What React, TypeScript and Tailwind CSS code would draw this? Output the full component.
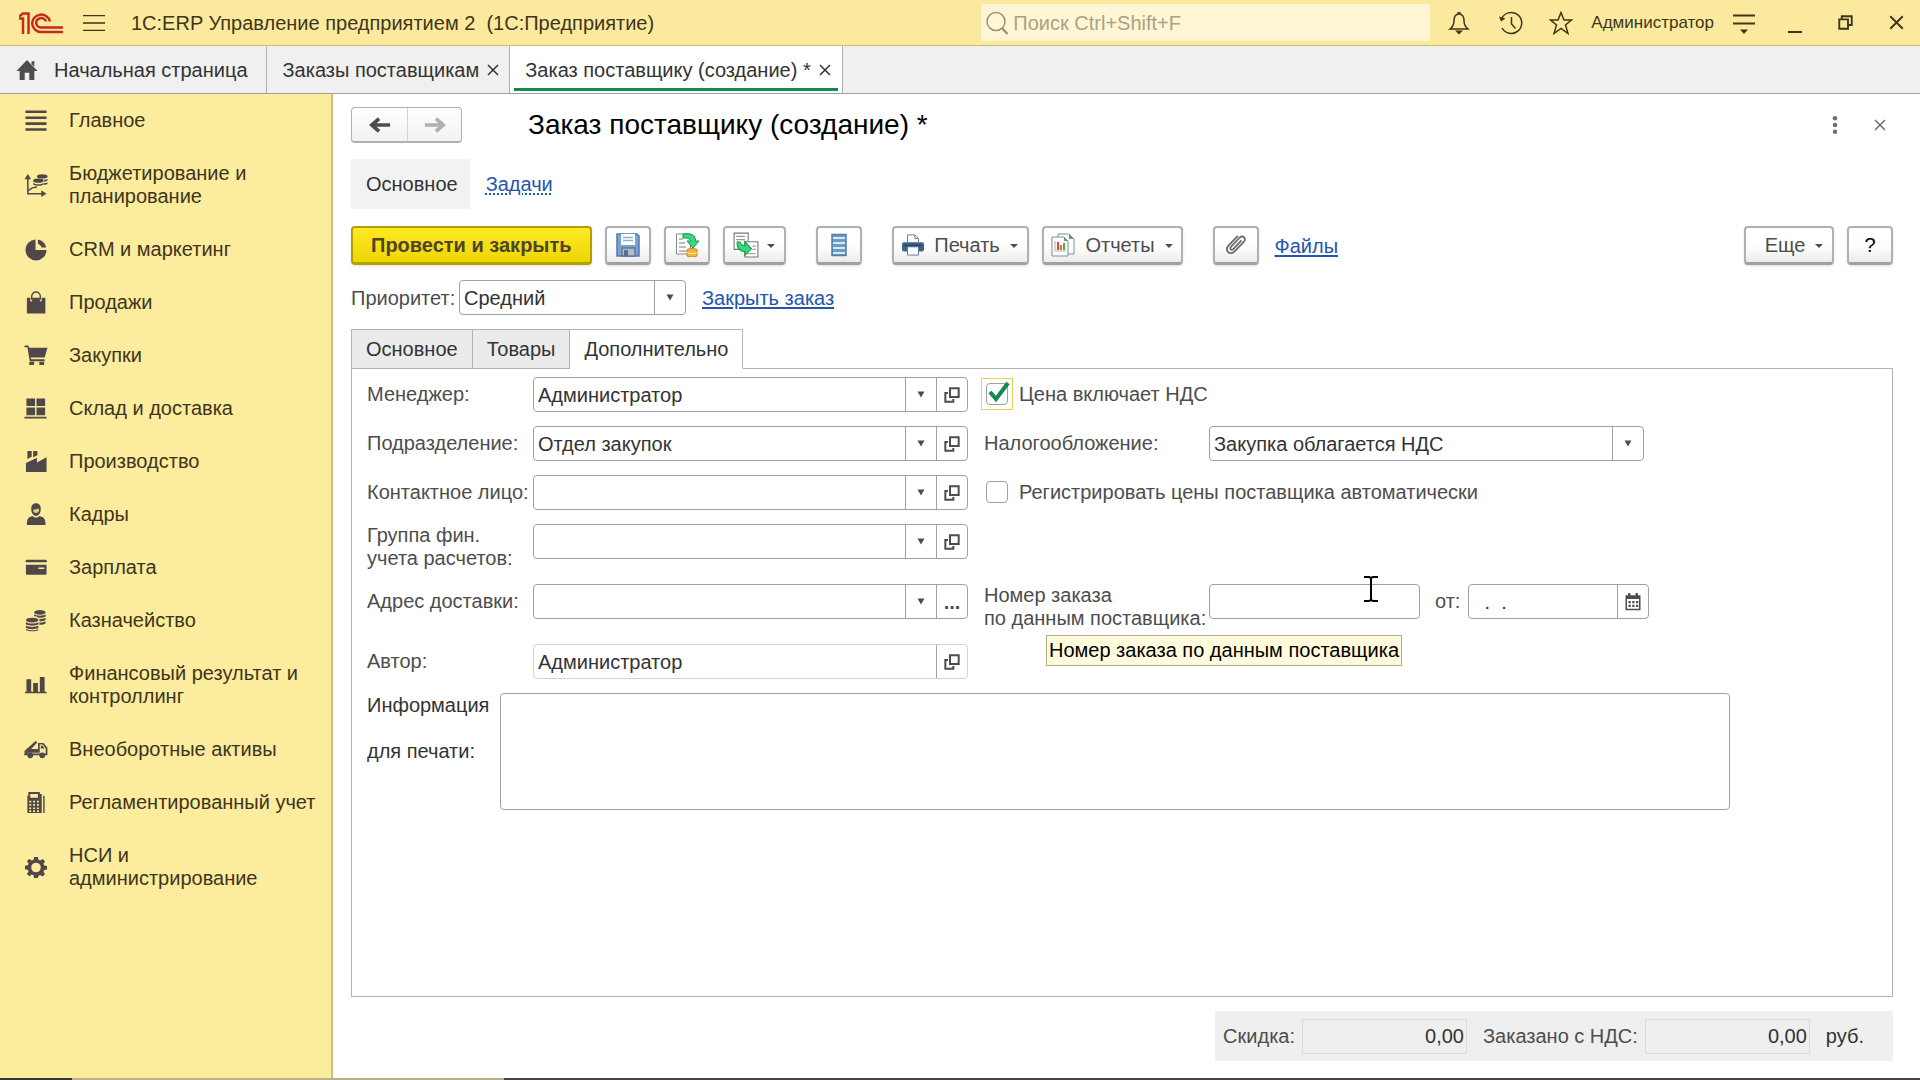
import { useState } from "react";
import type { ReactNode } from "react";

type IconProps = { children: ReactNode; className?: string };

function Icon({ children, className = "h-6 w-6" }: IconProps) {
  return (
    <svg
      viewBox="0 0 24 24"
      fill="none"
      stroke="currentColor"
      strokeWidth="1.5"
      aria-hidden="true"
      className={`shrink-0 ${className}`}
    >
      {children}
    </svg>
  );
}

function Solid({ children, className = "h-6 w-6" }: IconProps) {
  return (
    <svg
      viewBox="0 0 24 24"
      fill="currentColor"
      aria-hidden="true"
      className={`shrink-0 ${className}`}
    >
      {children}
    </svg>
  );
}

function Caret() {
  return (
    <svg viewBox="0 0 8 7" fill="currentColor" aria-hidden="true" className="h-[7px] w-2 shrink-0">
      <path d="M.5 0.500h7L4 6.500z" />
    </svg>
  );
}

function MenuCaret() {
  return (
    <svg viewBox="0 0 8 6" fill="currentColor" aria-hidden="true" className="h-1.5 w-2 shrink-0">
      <path d="M0 2h8L4 6z" />
    </svg>
  );
}

function Cross({ className = "h-3 w-3" }: { className?: string }) {
  return (
    <svg
      viewBox="0 0 12 12"
      fill="none"
      stroke="currentColor"
      strokeWidth="1.5"
      aria-hidden="true"
      className={`shrink-0 ${className}`}
    >
      <path d="M1 1l10 10M11 1L1 11" />
    </svg>
  );
}

const sections = [
  {
    title: "Главное",
    icon: <path d="M1 1.500h22v2.700H1zM1 7.700h22v2.700H1zM1 13.900h22v2.700H1zM1 20.100h22v2.700H1z" />,
  },
  {
    title: "Бюджетирование и\nпланирование",
    icon: (
      <>
        <path d="M2.700 4h1.600v15.700H19v1.600H2.700z" />
        <path d="M3.500 0L7 5.500H0zM23 20.500L17.500 17v7z" />
        <path d="M4 17.500l4-3 5-1" fill="none" stroke="currentColor" strokeWidth="1.500" />
        <ellipse cx="18.500" cy="2.500" rx="5.500" ry="2.200" />
        <ellipse cx="14.500" cy="7" rx="5.500" ry="2.200" />
        <path d="M20.500 6c1.500 0 3-.4 3.500-1v1.800c-.8.8-2 1.200-3.500 1.200zM20.500 9.500c1.500 0 3-.4 3.500-1v1.800c-.8.8-2 1.200-3.500 1.200zM9 9.300c2.500 1.700 8.500 1.700 11 0V11c-2.500 1.700-8.500 1.700-11 0z" />
      </>
    ),
  },
  {
    title: "CRM и маркетинг",
    icon: (
      <>
        <path d="M11.500 1.500V12.500H23A11 11 0 1 1 11.500 1.500z" />
        <path d="M14 1.500a10.500 10.500 0 0 1 8.500 8.500h-4.500a6 6 0 0 0-4-4z" />
      </>
    ),
  },
  {
    title: "Продажи",
    icon: (
      <>
        <path d="M2.500 7H6v3a1 1 0 0 0 2 0V7h8v3a1 1 0 0 0 2 0V7h3.800v16.500H2.500z" />
        <path d="M7.500 9V5.500a4.500 4.500 0 0 1 9 0V9" fill="none" stroke="currentColor" strokeWidth="1.500" />
      </>
    ),
  },
  {
    title: "Закупки",
    icon: (
      <>
        <path d="M0 1.500h4L5 4h19l-3 10H6.500l.5 2h14v2H5.500L3 3.500H0z" />
        <path d="M5 18.500h5V22H5zM15.500 18.500h5V22h-5z" />
      </>
    ),
  },
  {
    title: "Склад и доставка",
    icon: <path d="M2 1.500h9v8H2zM12.500 1.500h9v8h-9zM2 11h9v8H2zM12.500 11h9v8h-9zM0 20.500h23v2H0z" />,
  },
  {
    title: "Производство",
    icon: <path d="M3 1h4.500v6L3 9.500zM9 1h4.500v4.500L9 7.500zM1.500 13.500L13 8v5l10-5.500V23H1.500z" />,
  },
  {
    title: "Кадры",
    icon: (
      <>
        <path d="M7 6c0-7.500 10-7.500 10 0 0 4-2 7.500-5 7.500S7 10 7 6z" />
        <path d="M2.500 23c0-7 1.500-8.500 6-9.500 2 2.300 5 2.300 7 0 4.500 1 6.500 2.500 6.500 9.500z" />
        <path d="M9 7c2 0 4-.5 5-1.500l1.300 1.500c0 4.500-6.300 4.500-6.300 0z" fill="#fbec9e" opacity=".8" />
      </>
    ),
  },
  {
    title: "Зарплата",
    icon: <path d="M3 4h18.500a1.500 1.500 0 0 1 1.500 2.500H1.500A1.500 1.500 0 0 1 3 4zM1.500 9H23v9.500a1 1 0 0 1-1 1H2.500a1 1 0 0 1-1-1zm13 3v1.500h6V12z" />,
  },
  {
    title: "Казначейство",
    icon: (
      <>
        <ellipse cx="16" cy="3.500" rx="6" ry="2.500" />
        <path d="M10 5.500c3 2 9 2 12 0v2.300c-2 1.200-5 1.500-7.500 1.300C13.500 8 12 7.500 10 7.500zM15.500 10.500c2.500 0 5-.3 6.500-1.300v2.300c-1.500 1-4 1.400-6.500 1.300zM15.500 14.200c2.500 0 5-.3 6.500-1.300v2.300c-1.500 1-4 1.400-6.500 1.300z" />
        <ellipse cx="8" cy="11.500" rx="6.500" ry="2.500" />
        <path d="M1.500 13.500c3 2.200 10 2.200 13 0V16c-3 2-10 2-13 0zM1.500 17.200c3 2 10 2 13 0v2.300c-3 2-10 2-13 0zM1.500 20.800c3 1.800 10 1.800 13 0v1c-3 2-10 2-13 0z" />
      </>
    ),
  },
  {
    title: "Финансовый результат и\nконтроллинг",
    icon: <path d="M2 5.500h5V19H2zM9 9.500h5V19H9zM16 3h5v16h-5zM.5 18.500H23V20H.5z" />,
  },
  {
    title: "Внеоборотные активы",
    icon: (
      <>
        <path d="M11.500 3l2 1.500L7 11.500h8V14H2.500L0 17v-3.500z" />
        <path
          d="M1 17l2.500-2.500H15V6h4.500l3.500 4.500V17z"
          fill="none"
          stroke="currentColor"
          strokeWidth="1.800"
        />
        <circle cx="6" cy="18" r="3" />
        <circle cx="18.500" cy="18" r="3" />
        <path d="M17 8h2l2 3h-4z" />
      </>
    ),
  },
  {
    title: "Регламентированный учет",
    icon: (
      <>
        <path d="M4 1h12v2h2v20H3V5h1zM6 3v4h8V3z" fillRule="evenodd" />
        <path d="M19.500 5H21v18h-1.500z" />
        <path
          d="M5 11h2M9 11h2M13 11h2M5 14.500h2M9 14.500h2M13 14.500h2M5 18h2M9 18h2M13 18h2M5 21h2M9 21h2M13 21h2"
          stroke="#fbec9e"
          strokeWidth="1.800"
        />
      </>
    ),
  },
  {
    title: "НСИ и\nадминистрирование",
    icon: (
      <path
        fillRule="evenodd"
        d="M10 1h4l.6 3 1.700.7L19 3l2.400 2.700-1.600 2.500.7 1.800 3 .5v3.500l-3 .6-.7 1.800 1.600 2.600-2.600 2.500-2.500-1.600-1.700.7L14 23h-4l-.6-2.900-1.700-.7L5 21.200l-2.500-2.500 1.700-2.600-.7-1.800-3-.6v-3.500l3-.5.7-1.800-1.700-2.600L5 3l2.700 1.700L9.400 4zM12 7a5 5 0 1 0 0 10 5 5 0 0 0 0-10z"
      />
    ),
  },
];

function TopBar() {
  return (
    <header className="flex h-[46px] items-center border-b border-[#c9bc74] bg-[#fbea9e] pl-[19px] pr-4 text-[#40351a]">
      <svg
        viewBox="0 0 44 22"
        fill="none"
        stroke="#c8281e"
        strokeWidth="2.500"
        className="h-[22px] w-11 shrink-0"
        aria-label="1С"
      >
        <path d="M0 6.500h4V22M0 4.500L4 1.500h5.500V22" />
        <path d="M31 9.500a9 8.700 0 1 0-9 10.500h22" />
        <path d="M27 9.500a5 4.700 0 1 0-5 6h22" />
      </svg>
      <button type="button" aria-label="Меню" className="ml-5">
        <Icon className="h-6 w-[22px]">
          <path d="M0 4h24M0 12h24M0 20h24" />
        </Icon>
      </button>
      <h1 className="ml-[26px] whitespace-pre">1С:ERP Управление предприятием 2  (1С:Предприятие)</h1>

      <div className="ml-auto flex h-[37px] w-[449px] items-center bg-[#fff6d5] pl-1">
        <Icon className="h-6 w-6 text-[#9c9477]">
          <circle cx="11" cy="10.500" r="9" />
          <path d="M17 17l5.500 6" strokeWidth="2.500" />
        </Icon>
        <input
          type="search"
          aria-label="Поиск"
          placeholder="Поиск Ctrl+Shift+F"
          className="ml-1 w-full min-w-0 bg-transparent outline-none placeholder:text-[#aaa285]"
        />
      </div>

      <button type="button" aria-label="Уведомления" className="ml-[17px]">
        <Icon>
          <path d="M12 3c-4 0-5 3-5 7 0 4-1 5.500-4 8h18c-3-2.500-4-4-4-8 0-4-1-7-5-7z" />
          <path d="M8 19.500h8L12 23.500zM10.500 1h3v2h-3z" fill="currentColor" stroke="none" />
        </Icon>
      </button>
      <button type="button" aria-label="История" className="ml-7">
        <Icon>
          <path d="M2.500 8A10.500 10.500 0 1 1 3 17" />
          <path d="M0 5.500l2 5 4.500-3z" fill="currentColor" stroke="none" />
          <path d="M12.500 6v7l4 4.500" />
        </Icon>
      </button>
      <button type="button" aria-label="Избранное" className="ml-[26px]">
        <Icon>
          <path d="M12 1.500l3 7.500h7.500l-6 5 2.500 8.500-7-5-7 5L7.500 14l-6-5H9z" />
        </Icon>
      </button>
      <button type="button" className="ml-[18px] text-[17px]">
        Администратор
      </button>
      <button type="button" aria-label="Настройки" className="ml-[18px]">
        <Icon>
          <path d="M1 4.500h22M1 12.500h22" strokeWidth="2" />
          <path d="M8 18.500h8L12 23z" fill="currentColor" stroke="none" />
        </Icon>
      </button>
      <button type="button" aria-label="Свернуть" className="ml-8 flex h-6 w-3.5 items-end">
        <span className="mb-0.5 h-0.5 w-full bg-[#40351a]" />
      </button>
      <button type="button" aria-label="Восстановить" className="ml-9">
        <Icon className="h-[15px] w-[15px]">
          <path d="M6 6V2h16v14h-5M2 7h14v15H2z" strokeWidth="3" />
        </Icon>
      </button>
      <button type="button" aria-label="Закрыть" className="ml-9">
        <Cross className="h-[15px] w-[15px]" />
      </button>
    </header>
  );
}

function WindowTabs() {
  return (
    <nav aria-label="Открытые окна" className="flex h-12 border-b border-[#9f9f9f] bg-[#f0f0f0] text-[#333]">
      <a href="#home" className="flex items-center gap-4 border-r border-[#b0b0b0] pl-4 pr-[18px]">
        <Solid className="h-[22px] w-[22px] text-[#4d4d4d]">
          <path d="M12 1l11.500 12H20v10h-5.500v-8h-5v8H4V13H.5zM17 2.500h3v6l-3-3z" />
        </Solid>
        Начальная страница
      </a>
      <div className="flex items-center gap-2 border-r border-[#b0b0b0] pl-4 pr-2.5">
        <a href="#orders">Заказы поставщикам</a>
        <button type="button" aria-label="Закрыть вкладку">
          <Cross />
        </button>
      </div>
      <div className="border-r border-[#b0b0b0] bg-white px-1">
        <div className="flex h-[45px] items-center gap-2 border-b-[3px] border-[#118a4e] pl-[11px] pr-[7px] pt-[5px]">
          <a href="#order">Заказ поставщику (создание) *</a>
          <button type="button" aria-label="Закрыть вкладку">
            <Cross />
          </button>
        </div>
      </div>
    </nav>
  );
}

function Sidebar() {
  return (
    <aside className="w-[333px] shrink-0 border-r-2 border-[#cdbf85] bg-[#fbec9e] text-[#40351a]">
      <nav aria-label="Разделы">
        {sections.map((section) => (
          <a key={section.title} href="#section" className="flex items-center py-[15px] pl-6 pr-2 leading-[23px]">
            <Solid className="h-[23px] w-6 text-[#504848]">{section.icon}</Solid>
            <span className="ml-[21px] whitespace-pre-line">{section.title}</span>
          </a>
        ))}
      </nav>
    </aside>
  );
}

const toolButton =
  "flex h-[39px] items-center justify-center rounded border-2 border-b-[3px] border-[#b0b0b0] border-b-[#a0a0a0] bg-linear-to-b from-white from-50% to-[#ececec] text-[#4d4d4d] shadow-sm";

function Toolbar() {
  return (
    <div className="flex items-center pt-[17px]">
      <button
        type="button"
        className="h-[39px] rounded-sm border-2 border-b-[3px] border-[#b3a000] bg-linear-to-b from-[#ffe924] to-[#eed500] px-[18px] font-bold text-[#4d4526] shadow-sm"
      >
        Провести и закрыть
      </button>
      <button type="button" aria-label="Записать" className={`ml-[13px] w-[46px] ${toolButton}`}>
        <Icon>
          <path d="M1 1h20l2 2v20H1z" fill="#7ba3d0" stroke="#4f7cae" />
          <path d="M5 1h14v11H5z" fill="#fff" stroke="none" />
          <path d="M7 4.500h10M7 7.500h10" stroke="#8fb0d4" />
          <path d="M6 15h13v8H6z" fill="#b6bcc4" stroke="#5f7793" />
          <path d="M8 17h4v6H8z" fill="#4f6f96" stroke="none" />
        </Icon>
      </button>
      <button type="button" aria-label="Провести" className={`ml-[13px] w-[46px] ${toolButton}`}>
        <Icon>
          <path d="M1.500 1h14v20h-14z" fill="#fff" stroke="#8a8a8a" strokeWidth="1" />
          <path d="M4 6h4M4 10h6M4 14h7M4 18h7" stroke="#7a7a7a" strokeWidth="1" />
          <path d="M8 1c8-1 13 1 12.500 7H24l-6 7-6-7h3.500c0-2-3-3.500-7.500-3z" fill="#3ad67c" stroke="#149a4c" strokeWidth="1" />
          <path d="M12 16.500c2-1.200 8-1.200 10 0V23c-2 1.200-8 1.200-10 0z" fill="#f2b53c" stroke="#c58a1a" strokeWidth="1" />
          <path d="M12 19.800c3 1 7 1 10 0" stroke="#fff0c0" strokeWidth="1" />
        </Icon>
      </button>
      <button type="button" aria-label="Создать на основании" className={`ml-[13px] w-[63px] gap-2 ${toolButton}`}>
        <Icon className="h-[26px] w-[26px]">
          <path d="M1 1h13v15H1z" fill="#fff" stroke="#777" strokeWidth="1" />
          <path d="M11 9h12v14H11z" fill="#fff" stroke="#777" strokeWidth="1" />
          <path d="M3 4h8M3 7h8M18 13h3M18 16h3M13 20h8" stroke="#999" strokeWidth="1" />
          <path d="M4 9c2 0 3 0 3 1 0 2 1 2.500 4 2.500V9l6 6.500-6 6V18C6 18 3 14 4 9z" fill="#3ad67c" stroke="#149a4c" strokeWidth="1" />
        </Icon>
        <MenuCaret />
      </button>
      <button type="button" aria-label="Структура подчиненности" className={`ml-[30px] w-[46px] ${toolButton}`}>
        <Icon>
          <path d="M5 1.500h14v21H5z" fill="#6d9cc4" stroke="#527fa8" />
          <path d="M6 5h12M6 10h12M6 15h12M6 20h12" stroke="#d8e8f6" strokeWidth="2" />
        </Icon>
      </button>
      <button type="button" className={`ml-[30px] w-[137px] ${toolButton}`}>
        <Icon className="h-[22px] w-[22px]">
          <path d="M6 9V1h8l4 4v4" fill="#fff" stroke="#777" strokeWidth="1" />
          <path d="M14 1v4h4" stroke="#777" strokeWidth="1" />
          <rect x="0" y="9" width="24" height="10" rx="2" fill="#3d6488" stroke="none" />
          <path d="M2 12.500h20" stroke="#223f5c" />
          <path d="M6 14h12v9H6z" fill="#fff" stroke="#56789b" strokeWidth="1" />
        </Icon>
        <span className="ml-2.5 mr-2.5">Печать</span>
        <MenuCaret />
      </button>
      <button type="button" className={`ml-[13px] w-[141px] ${toolButton}`}>
        <Icon>
          <path d="M7 1h11l5 5v15H7z" fill="#fff" stroke="#7c8a96" strokeWidth="1" />
          <path d="M18 1v5h5z" fill="#7c8a96" stroke="none" />
          <path d="M1 4h12l4 4v15H1z" fill="#fff" stroke="#7c8a96" strokeWidth="1" />
          <path d="M13 4v4h4z" fill="#7c8a96" stroke="none" />
          <path d="M4 8v10M4 18h11" stroke="#a9b4bd" strokeWidth="1" />
          <path d="M7 9v8" stroke="#e0452e" strokeWidth="2" />
          <path d="M10 12v5" stroke="#d8762e" strokeWidth="2" />
          <path d="M13 10v7" stroke="#55a83b" strokeWidth="2" />
        </Icon>
        <span className="ml-2.5 mr-2.5">Отчеты</span>
        <MenuCaret />
      </button>
      <button type="button" aria-label="Присоединенные файлы" className={`ml-[30px] w-[46px] ${toolButton}`}>
        <Icon className="h-[22px] w-[22px]">
          <path
            d="M18 7L9 16.500c-2 2-4.500-.5-2.500-2.500L16 4c3.500-3.500 8 1 4.500 4.500L10.500 19C5.500 24-1 18 4 12.500L14 2"
            strokeWidth="2"
            stroke="#6e6e6e"
          />
        </Icon>
      </button>
      <a href="#files" className="ml-4 text-[#1e56b0] underline underline-offset-2">
        Файлы
      </a>
      <button type="button" className={`ml-auto w-[90px] gap-2.5 pl-2.5 ${toolButton}`}>
        Еще
        <MenuCaret />
      </button>
      <button type="button" aria-label="Справка" className={`ml-[13px] w-[46px] ${toolButton}`}>
        <span className="text-black">?</span>
      </button>
    </div>
  );
}

const fieldBox = "flex h-[35px] rounded-sm border border-[#a0a0a0] bg-white text-[#333]";
const readOnlyBox = "flex h-[35px] rounded-sm border border-[#d4d4d4] bg-white text-[#333]";
const fieldButton = "flex w-[31px] shrink-0 items-center justify-center border-l border-[#a0a0a0] text-[#4d4d4d]";

type FieldProps = {
  id: string;
  value?: string;
  action?: "open" | "more";
  readOnly?: boolean;
};

function LookupField({ id, value = "", action = "open", readOnly = false }: FieldProps) {
  return (
    <div className={readOnly ? readOnlyBox : fieldBox}>
      <input
        id={id}
        type="text"
        defaultValue={value}
        readOnly={readOnly}
        className="min-w-0 flex-1 bg-transparent px-1 outline-none"
      />
      {!readOnly && (
        <button type="button" aria-label="Выбрать из списка" className={fieldButton}>
          <Caret />
        </button>
      )}
      <button type="button" aria-label="Открыть" className={fieldButton}>
        {action === "open" ? (
          <Icon className="h-4 w-4">
            <path d="M9 2h13v13H9zM6 9H2v13h12v-4" strokeWidth="3" />
          </Icon>
        ) : (
          <span className="font-bold leading-none">...</span>
        )}
      </button>
    </div>
  );
}

function SelectField({ id, value, className }: { id: string; value: string; className: string }) {
  return (
    <div className={`relative ${fieldBox} ${className}`}>
      <select id={id} defaultValue={value} className="w-full appearance-none bg-transparent pl-1 pr-9 outline-none">
        <option>{value}</option>
      </select>
      <span className={`pointer-events-none absolute inset-y-0 right-0 ${fieldButton}`}>
        <Caret />
      </span>
    </div>
  );
}

function CheckField({ label, initial, focused }: { label: string; initial: boolean; focused?: boolean }) {
  const [checked, setChecked] = useState(initial);

  return (
    <label className="flex h-[33px] items-center gap-1.5 text-[#4d4d4d]">
      <span className={`relative border p-1 ${focused ? "border-[#f2cf4a]" : "border-transparent"}`}>
        <input
          type="checkbox"
          checked={checked}
          onChange={(e) => setChecked(e.target.checked)}
          className="block h-[22px] w-[22px] appearance-none rounded-sm border border-[#a0a0a0] bg-white"
        />
        {checked && (
          <svg
            viewBox="0 0 24 24"
            fill="none"
            stroke="#118a4e"
            strokeWidth="4"
            className="pointer-events-none absolute left-1 top-0.5 h-6 w-6"
          >
            <path d="M4 11l6 7L22 2" />
          </svg>
        )}
      </span>
      {label}
    </label>
  );
}

const labelText = "leading-[23px] text-[#4d4d4d]";

function OrderForm() {
  return (
    <div className="flex flex-1 flex-col border border-[#b4b4b4] border-t-0 px-[15px] pt-2">
      <div className="grid grid-cols-[166px_minmax(0,435px)_225px_minmax(0,1fr)] items-start gap-y-3.5">
        <label htmlFor="manager" className={`${labelText} py-1.5`}>
          Менеджер:
        </label>
        <LookupField id="manager" value="Администратор" />
        <div className="col-span-2 pl-[13px]">
          <CheckField label="Цена включает НДС" initial focused />
        </div>

        <label htmlFor="department" className={`${labelText} py-1.5`}>
          Подразделение:
        </label>
        <LookupField id="department" value="Отдел закупок" />
        <label htmlFor="tax" className={`${labelText} ml-4 py-1.5`}>
          Налогообложение:
        </label>
        <SelectField id="tax" value="Закупка облагается НДС" className="ml-4 w-[435px]" />

        <label htmlFor="contact" className={`${labelText} whitespace-nowrap py-1.5`}>
          Контактное лицо:
        </label>
        <LookupField id="contact" />
        <div className="col-span-2 pl-[13px]">
          <CheckField label="Регистрировать цены поставщика автоматически" initial={false} />
        </div>

        <label htmlFor="group" className={labelText}>
          Группа фин.
          <br />
          учета расчетов:
        </label>
        <LookupField id="group" />
        <div className="col-span-2" />

        <label htmlFor="address" className={`${labelText} py-1.5`}>
          Адрес доставки:
        </label>
        <LookupField id="address" action="more" />
        <div className="relative ml-4">
          <label htmlFor="supplier-number" className={`block whitespace-nowrap ${labelText}`}>
            Номер заказа
            <br />
            по данным поставщика:
          </label>
          <div
            role="tooltip"
            className="absolute left-[62px] top-[51px] z-10 whitespace-nowrap border border-[#b0a98a] bg-[#fffbdc] px-0.5 py-0.5 leading-[25px] text-black"
          >
            Номер заказа по данным поставщика
          </div>
        </div>
        <div className="relative ml-4 flex items-center">
          <input
            id="supplier-number"
            type="text"
            className="h-[35px] w-[211px] rounded-sm border border-[#a0a0a0] bg-white px-1 outline-none"
          />
          <svg
            viewBox="0 0 16 26"
            fill="none"
            stroke="#000"
            strokeWidth="2"
            aria-hidden="true"
            className="pointer-events-none absolute -top-2 left-[154px] h-[26px] w-4"
          >
            <path d="M1 1h5l2 1 2-1h5M8 2v22M1 25h5l2-1 2 1h5" />
          </svg>
          <label htmlFor="supplier-date" className={`ml-[15px] ${labelText}`}>
            от:
          </label>
          <div className={`ml-2 w-[181px] ${fieldBox}`}>
            <input
              id="supplier-date"
              type="text"
              defaultValue="  .  ."
              className="min-w-0 flex-1 bg-transparent px-1 outline-none"
            />
            <button type="button" aria-label="Выбрать дату" className={fieldButton}>
              <Icon className="h-[18px] w-[18px]">
                <path d="M3 4h18v18H3z" strokeWidth="2" />
                <path d="M3 6h18" strokeWidth="4" />
                <path d="M7 0v6M17 0v6" strokeWidth="3" />
                <path d="M6 12h3M11 12h3M16 12h3M6 17h3M11 17h3M16 17h3" strokeWidth="3" />
              </Icon>
            </button>
          </div>
        </div>

        <label htmlFor="author" className={`${labelText} py-1.5`}>
          Автор:
        </label>
        <LookupField id="author" value="Администратор" readOnly />
      </div>

      <div className="mt-3.5 flex">
        <label htmlFor="print-info" className="w-[133px] shrink-0 leading-[46px] text-[#333]">
          <span className="-mt-[11px] block">
            Информация
            <br />
            для печати:
          </span>
        </label>
        <textarea
          id="print-info"
          className="mr-[147px] block h-[117px] min-w-0 flex-1 resize-none rounded-sm border border-[#a0a0a0] p-1 outline-none"
        />
      </div>
    </div>
  );
}

function Totals() {
  const amount = "h-[35px] w-[165px] border border-[#dcdcdc] bg-transparent px-0.5 text-right text-[#333] outline-none";

  return (
    <div className="mt-3.5 flex h-[50px] items-center self-end bg-[#efefef] pl-2 pr-[29px] text-[#4d4d4d]">
      <label htmlFor="discount">Скидка:</label>
      <input id="discount" readOnly value="0,00" className={`ml-[7px] ${amount}`} />
      <label htmlFor="ordered" className="ml-4">
        Заказано с НДС:
      </label>
      <input id="ordered" readOnly value="0,00" className={`ml-[7px] ${amount}`} />
      <span className="ml-4 text-[#333]">руб.</span>
    </div>
  );
}

const formTabs = ["Основное", "Товары", "Дополнительно"];

export default function App() {
  const [tab, setTab] = useState("Дополнительно");

  return (
    <div className="flex min-h-screen flex-col bg-white font-['Liberation_Sans',Arial,sans-serif] text-[20px] leading-6">
      <TopBar />
      <WindowTabs />
      <div className="flex flex-1">
        <Sidebar />
        <main className="flex min-w-0 flex-1 flex-col pb-[17px] pl-[18px] pr-[27px]">
          <div className="flex items-center pt-[13px]">
            <div className="flex h-9 rounded border border-b-2 border-[#b0b0b0] bg-linear-to-b from-white to-[#f2f2f2]">
              <button type="button" aria-label="Назад" className="flex w-[55px] items-center justify-center text-[#4d4d4d]">
                <Icon className="h-[22px] w-[22px]">
                  <path d="M3 12h20M11 5l-8 7 8 7" strokeWidth="4" />
                </Icon>
              </button>
              <button
                type="button"
                aria-label="Вперед"
                className="flex w-[54px] items-center justify-center border-l border-[#d4d4d4] text-[#b0b0b0]"
              >
                <Icon className="h-[22px] w-[22px]">
                  <path d="M1 12h20M13 5l8 7-8 7" strokeWidth="4" />
                </Icon>
              </button>
            </div>
            <h2 className="ml-[66px] text-[28px] leading-8 text-black">Заказ поставщику (создание) *</h2>
            <button type="button" aria-label="Еще действия" className="ml-auto text-[#6e6e6e]">
              <Solid className="h-[18px] w-[18px]">
                <circle cx="12" cy="3" r="3" />
                <circle cx="12" cy="12" r="3" />
                <circle cx="12" cy="21" r="3" />
              </Solid>
            </button>
            <button type="button" aria-label="Закрыть форму" className="ml-[30px] mr-[7px] text-[#6e6e6e]">
              <Cross />
            </button>
          </div>

          <nav aria-label="Навигация формы" className="flex items-center pt-4">
            <a href="#main" className="flex h-[50px] items-center bg-[#f2f2f2] pl-[15px] pr-3 text-[#333]">
              Основное
            </a>
            <a href="#tasks" className="ml-4 text-[#1e56b0] underline decoration-dotted underline-offset-2">
              Задачи
            </a>
          </nav>

          <Toolbar />

          <div className="flex items-center pt-[15px]">
            <label htmlFor="priority" className="w-[108px] text-[#4d4d4d]">
              Приоритет:
            </label>
            <SelectField id="priority" value="Средний" className="w-[227px]" />
            <a href="#close" className="ml-4 text-[#1e56b0] underline underline-offset-2">
              Закрыть заказ
            </a>
          </div>

          <div role="tablist" className="flex pt-3.5">
            {formTabs.map((name) => (
              <button
                key={name}
                type="button"
                role="tab"
                aria-selected={name === tab}
                onClick={() => setTab(name)}
                className={`h-10 border border-l-0 border-[#b4b4b4] px-3.5 text-[#333] first:border-l ${
                  name === tab ? "border-b-transparent bg-white" : "bg-[#ebebeb]"
                }`}
              >
                {name}
              </button>
            ))}
            <div className="flex-1 border-b border-[#b4b4b4]" />
          </div>

          <OrderForm />
          <Totals />
        </main>
      </div>
      <footer className="flex h-0.5">
        <div className="w-[72px] bg-[#3a3436]" />
        <div className="w-[432px] bg-[#b9b08a]" />
        <div className="flex-1 bg-[#4a4246]" />
      </footer>
    </div>
  );
}
